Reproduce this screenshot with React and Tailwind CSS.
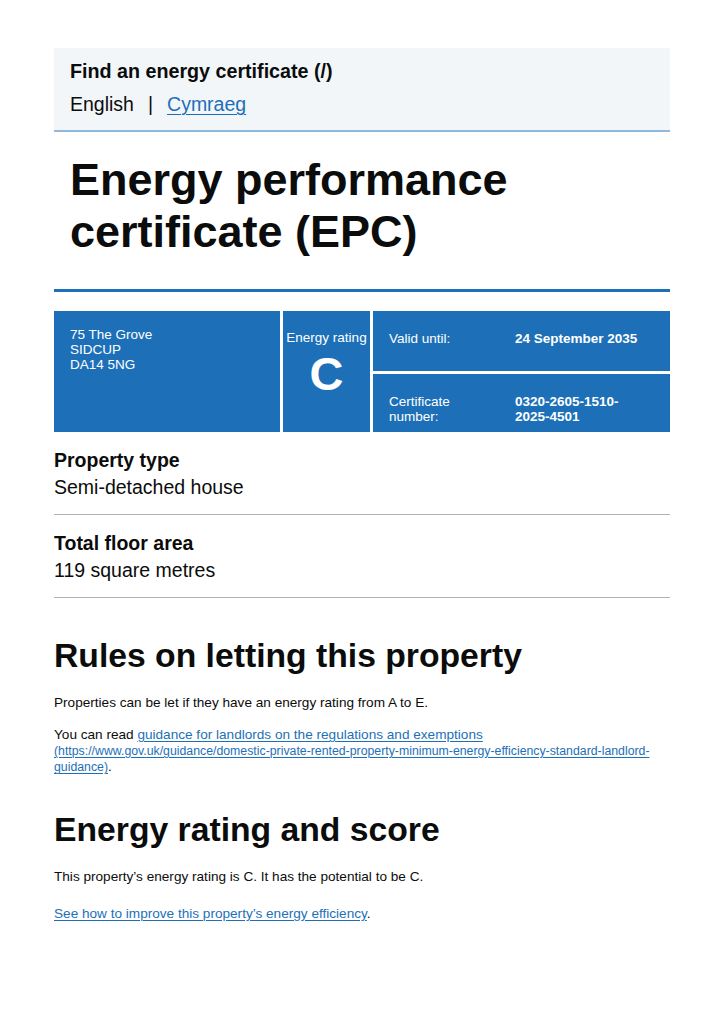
import React from 'react';

const font = { fontFamily: '"Liberation Sans", Arial, sans-serif' };

function Summary() {
  return (
    <div className="grid grid-cols-[226px_87px_297px] grid-rows-[60px_58px] gap-[3px] mt-[19px] text-white text-[13.5px] leading-[15px]">
      <div className="row-span-2 bg-[#1d70b8] pl-4 pt-4">
        <div>75 The Grove</div>
        <div>SIDCUP</div>
        <div>DA14 5NG</div>
      </div>
      <div className="row-span-2 bg-[#1d70b8] flex flex-col items-center pt-[19px]">
        <div className="text-[13.5px] whitespace-nowrap">Energy rating</div>
        <div className="text-[47px] leading-[47px] font-bold mt-[5px]">C</div>
      </div>
      <div className="bg-[#1d70b8] pl-4 pt-5 flex">
        <div className="w-[126px]">Valid until:</div>
        <div className="font-bold">24 September 2035</div>
      </div>
      <div className="bg-[#1d70b8] pl-4 pt-5 flex">
        <div className="w-[126px]">
          Certificate
          <br />
          number:
        </div>
        <div className="font-bold">
          0320-2605-1510-
          <br />
          2025-4501
        </div>
      </div>
    </div>
  );
}

function Fact({ label, value }) {
  return (
    <div className="border-b border-[#b1b4b6] pt-4 pb-[14px]">
      <div className="text-[19.5px] leading-[25px] font-bold">{label}</div>
      <div className="text-[19.5px] leading-[25px] mt-[2px]">{value}</div>
    </div>
  );
}

export default function App() {
  return (
    <div className="min-h-[1024px] bg-white text-[#0b0c0c]" style={font}>
      <div className="w-[616px] mx-[54px] pt-12">
        <div className="bg-[#f3f6f9] border-b-2 border-[#8fb9dd] px-4 pt-[11px] pb-[13px]">
          <div className="text-[19.7px] leading-[25px] font-bold">Find an energy certificate (/)</div>
          <div className="text-[19.5px] leading-[25px] mt-2 flex">
            <span>English</span>
            <span className="mx-[14px]">|</span>
            <a href="#" className="text-[#1d70b8] underline decoration-1 underline-offset-[3px]">Cymraeg</a>
          </div>
        </div>

        <h1 className="mt-[22px] px-4 text-[45px] leading-[52px] font-bold">
          Energy performance
          <br />
          certificate (EPC)
        </h1>
        <div className="mt-[31px] h-[3px] bg-[#1d70b8]" />

        <Summary />

        <Fact label="Property type" value="Semi-detached house" />
        <Fact label="Total floor area" value="119 square metres" />

        <h2 className="mt-[37px] text-[33.7px] leading-[40px] font-bold">Rules on letting this property</h2>
        <p className="mt-5 text-[13.6px] leading-4">
          Properties can be let if they have an energy rating from A to E.
        </p>
        <p className="mt-4 text-[13.6px] leading-[15.5px]">
          You can read{' '}
          <a href="#" className="text-[#1d70b8] underline decoration-1 underline-offset-2">
            guidance for landlords on the regulations and exemptions
            <br />
            <span className="text-[12.3px]">
              (https://www.gov.uk/guidance/domestic-private-rented-property-minimum-energy-efficiency-standard-landlord-
              <br />
              guidance)
            </span>
          </a>
          .
        </p>

        <h2 className="mt-[33px] text-[33.7px] leading-[40px] font-bold">Energy rating and score</h2>
        <p className="mt-5 text-[13.6px] leading-4">
          This property’s energy rating is C. It has the potential to be C.
        </p>
        <p className="mt-[21px] text-[13.6px] leading-4">
          <a href="#" className="text-[#1d70b8] underline decoration-1 underline-offset-2">
            See how to improve this property’s energy efficiency
          </a>
          .
        </p>
      </div>
    </div>
  );
}
